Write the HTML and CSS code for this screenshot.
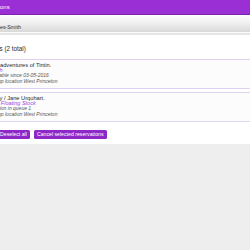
FILE: index.html
```html
<!DOCTYPE html>
<html lang="en">
<head>
    <meta charset="UTF-8">
    <meta name="viewport" content="width=device-width, initial-scale=1.0">
    <title>Reservations</title>
    <link rel="stylesheet" href="styles.css">
</head>
<body>
    <div class="page">
        <div class="topbar">Reservations</div>
        <div class="patron-bar">Mary Jones-Smith</div>

        <div class="content">
            <h2 class="list-title">Reservations (2 total)</h2>

            <ul class="holds">
                <li class="hold">
                    <div class="hold-title">The adventures of Tintin.</div>
                    <div class="hold-collection">Youth</div>
                    <div class="hold-meta">Available since 03-05-2016</div>
                    <div class="hold-meta">Pickup location West Princeton</div>
                </li>
                <li class="hold">
                    <div class="hold-title">Away / Jane Urquhart.</div>
                    <div class="hold-collection">Kids Floating Stock</div>
                    <div class="hold-meta">Position in queue 1</div>
                    <div class="hold-meta">Pickup location West Princeton</div>
                </li>
            </ul>

            <div class="actions">
                <button class="btn" type="button">Select all</button>
                <button class="btn" type="button">Deselect all</button>
                <button class="btn" type="button">Cancel selected reservations</button>
            </div>
        </div>
    </div>
</body>
</html>
```

FILE: styles.css
```css
:root {
    --purple: #9a2fd6;
    --purple-dark: #7c22ad;
    --button-bg: #8e27c8;
    --link-purple: #a341df;
    --text-primary: #2b2b2b;
    --text-secondary: #555;
    --hold-border: #e2d0f0;
    --page-bg: #eeeeee;
    --font-sans: "Liberation Sans", Arial, Helvetica, sans-serif;
}

* {
    box-sizing: border-box;
    margin: 0;
    padding: 0;
}

body {
    background: var(--page-bg);
    font-family: var(--font-sans);
    color: var(--text-primary);
    overflow: hidden;
}

/* the view is scrolled a little to the right */
.page {
    margin-left: -34px;
}

.topbar {
    height: 15px;
    line-height: 14px;
    padding-left: 8.7px;
    background: var(--purple);
    border-bottom: 1px solid var(--purple-dark);
    color: #fff;
    font-size: 6px;
}

.patron-bar {
    height: 18px;
    padding: 9px 0 0 12.2px;
    line-height: 6px;
    font-size: 5.3px;
    background: linear-gradient(#fdfdfd, #f2f2f2 40%, #d9d9d9);
    border-bottom: 1px solid #fafafa;
}

.content {
    background: #fff;
    border-top: 2px solid #e6e6e6;
    padding: 9.5px 0 5px;
}

.list-title {
    font-size: 6.3px;
    font-weight: 400;
    line-height: 8px;
    margin-bottom: 6.5px;
}

.holds {
    list-style: none;
}

.hold {
    padding: 2.5px 0 3.5px 22.6px;
    background: #fcfcfc;
    border-top: 1px solid var(--hold-border);
    border-bottom: 1px solid var(--hold-border);
    line-height: 5.4px;
}

.hold + .hold {
    margin-top: 3.5px;
    border-top-color: #ddd4ef;
    border-bottom-color: #dcd8f2;
}

.hold-title {
    font-size: 5.7px;
}

.hold-collection {
    font-size: 5.5px;
    font-style: italic;
    color: var(--link-purple);
}

.hold-meta {
    font-size: 5px;
    font-style: italic;
    color: var(--text-secondary);
}

.actions {
    display: flex;
    gap: 4px;
    margin-top: 8.4px;
}

.btn {
    height: 9px;
    padding: 0 3px;
    line-height: 9px;
    border: none;
    border-radius: 1.5px;
    background: var(--button-bg);
    color: #fff;
    font-family: var(--font-sans);
    font-size: 5.2px;
}
```
